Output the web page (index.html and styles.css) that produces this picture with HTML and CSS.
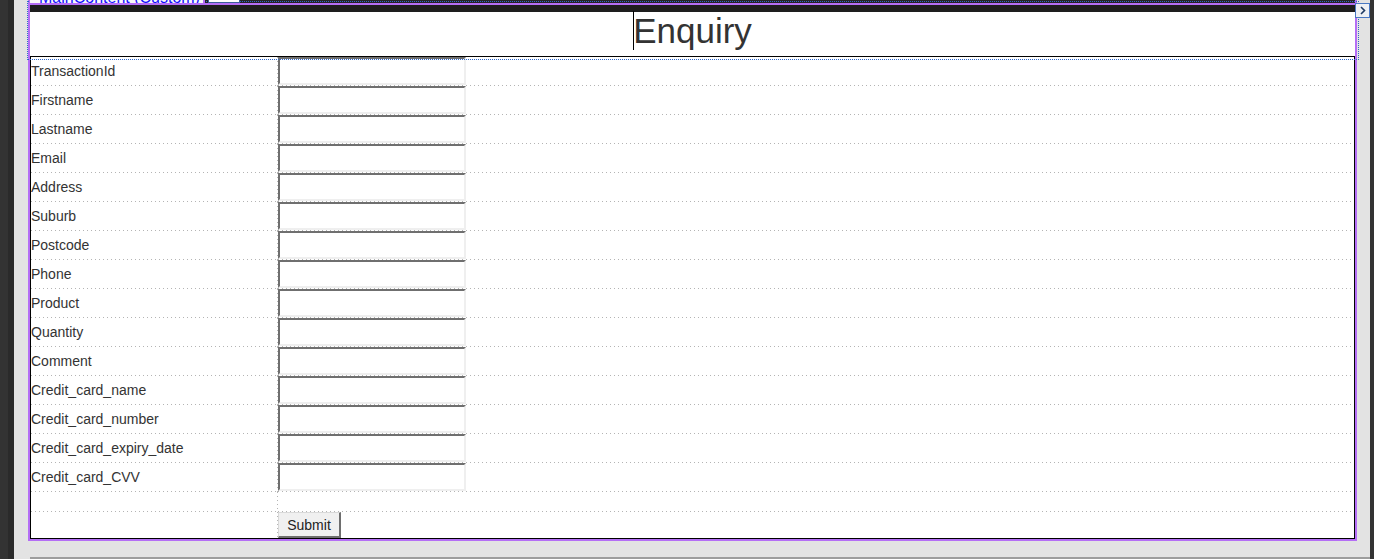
FILE: index.html
```html
<!DOCTYPE html>
<html lang="en">
<head>
<meta charset="utf-8">
<title>Enquiry</title>
<link rel="stylesheet" href="styles.css">
</head>
<body>
<div class="rail-left"></div>
<main class="canvas">
  <div class="surface">
    <div class="topstrip"></div>
    <div class="accent"></div>
    <div class="darkbar"></div>
    <header class="heading"><span class="title">Enquiry</span></header>
    <table class="form">
      <tr><td class="lbl">TransactionId</td><td class="fld"><input type="text"></td><td class="rest"></td></tr>
      <tr><td class="lbl">Firstname</td><td class="fld"><input type="text"></td><td class="rest"></td></tr>
      <tr><td class="lbl">Lastname</td><td class="fld"><input type="text"></td><td class="rest"></td></tr>
      <tr><td class="lbl">Email</td><td class="fld"><input type="text"></td><td class="rest"></td></tr>
      <tr><td class="lbl">Address</td><td class="fld"><input type="text"></td><td class="rest"></td></tr>
      <tr><td class="lbl">Suburb</td><td class="fld"><input type="text"></td><td class="rest"></td></tr>
      <tr><td class="lbl">Postcode</td><td class="fld"><input type="text"></td><td class="rest"></td></tr>
      <tr><td class="lbl">Phone</td><td class="fld"><input type="text"></td><td class="rest"></td></tr>
      <tr><td class="lbl">Product</td><td class="fld"><input type="text"></td><td class="rest"></td></tr>
      <tr><td class="lbl">Quantity</td><td class="fld"><input type="text"></td><td class="rest"></td></tr>
      <tr><td class="lbl">Comment</td><td class="fld"><input type="text"></td><td class="rest"></td></tr>
      <tr><td class="lbl">Credit_card_name</td><td class="fld"><input type="text"></td><td class="rest"></td></tr>
      <tr><td class="lbl">Credit_card_number</td><td class="fld"><input type="text"></td><td class="rest"></td></tr>
      <tr><td class="lbl">Credit_card_expiry_date</td><td class="fld"><input type="text"></td><td class="rest"></td></tr>
      <tr><td class="lbl">Credit_card_CVV</td><td class="fld"><input type="text"></td><td class="rest"></td></tr>
      <tr class="gap"><td class="lbl"></td><td class="fld"></td><td class="rest"></td></tr>
      <tr class="actions"><td class="lbl"></td><td class="fld"><button type="button">Submit</button></td><td class="rest"></td></tr>
    </table>
  </div>
  <div class="next-block"></div>
  <div class="selection"></div>
  <div class="tab-label">MainContent (Custom)</div>
  <div class="tab-chip"></div>
  <div class="scroll-btn">
    <svg width="13" height="13" viewBox="0 0 13 13"><polyline points="5,3 8.5,6.5 5,10" fill="none" stroke="#1f3a63" stroke-width="1.6"/></svg>
  </div>
</main>
<div class="rail-right"></div>
</body>
</html>
```

FILE: styles.css
```css
html, body {
  margin: 0;
  padding: 0;
}

body {
  width: 1374px;
  height: 559px;
  overflow: hidden;
  display: flex;
  background: #e3e3e3;
  font-family: "Liberation Sans", Arial, sans-serif;
}

.rail-left {
  flex: 0 0 14px;
  background: linear-gradient(to right, #333333 0, #333333 8px, #2a2a2a 8px, #2a2a2a 14px);
}

.rail-right {
  flex: 0 0 4px;
  background: #333333;
}

.canvas {
  flex: 1;
  position: relative;
  padding-left: 14px;
  display: flex;
  flex-direction: column;
  align-items: flex-start;
}

.surface {
  width: 1329px;
  box-sizing: border-box;
  border: 2px solid #b46ef5;
  border-top: 0;
  display: flex;
  flex-direction: column;
  background: #fff;
}

.topstrip {
  height: 3px;
  background: #252526;
}

.accent {
  height: 2px;
  background: #b46ef5;
}

.darkbar {
  height: 7px;
  background: #1e1e1e;
}

.heading {
  height: 44px;
  background: #fff;
  text-align: center;
  font-size: 35px;
  line-height: 38px;
  color: #333;
}

.title {
  position: relative;
}

.title::before {
  content: "";
  position: absolute;
  left: 0;
  top: 0;
  height: 39px;
  border-left: 1px solid #000;
}

.form {
  width: 100%;
  box-sizing: border-box;
  border: 1px solid #000;
  border-spacing: 0;
  table-layout: fixed;
  background: #fff;
}

.form td {
  padding: 0;
  height: 29px;
  box-sizing: border-box;
  border-bottom: 1px solid transparent;
  background-image: linear-gradient(to right, #b4b4b4 1px, transparent 1px);
  background-size: 4px 1px;
  background-repeat: repeat-x;
  background-position: left bottom;
  background-origin: border-box;
}

.form td.lbl {
  width: 247px;
  padding-left: 0;
  border-right: 1px solid transparent;
  font-size: 14px;
  color: #333;
  vertical-align: middle;
  white-space: nowrap;
  background-image:
    linear-gradient(to right, #b4b4b4 1px, transparent 1px),
    linear-gradient(to bottom, #b4b4b4 1px, transparent 1px);
  background-size: 4px 1px, 1px 4px;
  background-repeat: repeat-x, repeat-y;
  background-position: left bottom, right top;
}

.form td.fld {
  width: 188px;
  vertical-align: top;
}

.fld input {
  display: block;
  width: 188px;
  height: 28px;
  box-sizing: border-box;
  margin: 0;
  padding: 0;
  border-style: solid;
  border-width: 2px;
  border-color: #6f6f6f #efefef #efefef #6f6f6f;
  background: #fff;
}

.form .gap td {
  height: 20px;
}

.form .actions td {
  height: 26px;
  border-bottom: 0;
  background-image: none;
}

.form .actions td.lbl {
  background-image: linear-gradient(to bottom, #b4b4b4 1px, transparent 1px);
  background-size: 1px 4px;
  background-repeat: repeat-y;
  background-position: right top;
}

.actions button {
  display: block;
  width: 63px;
  height: 26px;
  margin: 0;
  padding: 0;
  font-family: "Liberation Sans", Arial, sans-serif;
  font-size: 14px;
  color: #222;
  background: #f0f0f0;
  border-style: solid;
  border-width: 1px 2px 2px 1px;
  border-color: #d9d9d9 #6e6e6e #6e6e6e #d9d9d9;
}

.next-block {
  margin-top: 16px;
  margin-left: 2px;
  align-self: stretch;
  border-top: 2px solid #9d9d9d;
}

.selection {
  position: absolute;
  left: 13px;
  top: 1px;
  width: 1332px;
  height: 59px;
  box-sizing: border-box;
  border: 1px dotted #2e67c9;
  pointer-events: none;
  z-index: 1;
}

.tab-label {
  position: absolute;
  left: 16px;
  top: -12px;
  width: 175px;
  height: 15px;
  box-sizing: border-box;
  padding-left: 9px;
  background: #fafafa;
  border-right: 2px solid #b46ef5;
  color: #1010ff;
  font-size: 16px;
  line-height: 19px;
  white-space: nowrap;
  overflow: hidden;
  z-index: 2;
}

.tab-chip {
  position: absolute;
  left: 194px;
  top: -10px;
  width: 32px;
  height: 13px;
  box-sizing: border-box;
  background: #fff;
  border: 1px solid #3c5f9c;
  z-index: 2;
}

.scroll-btn {
  position: absolute;
  left: 1341px;
  top: 3px;
  width: 15px;
  height: 15px;
  box-sizing: border-box;
  border: 1px solid #4a78c2;
  background: #eef0f4;
  display: flex;
  align-items: center;
  justify-content: center;
  z-index: 2;
}

.scroll-btn svg {
  display: block;
}
```
